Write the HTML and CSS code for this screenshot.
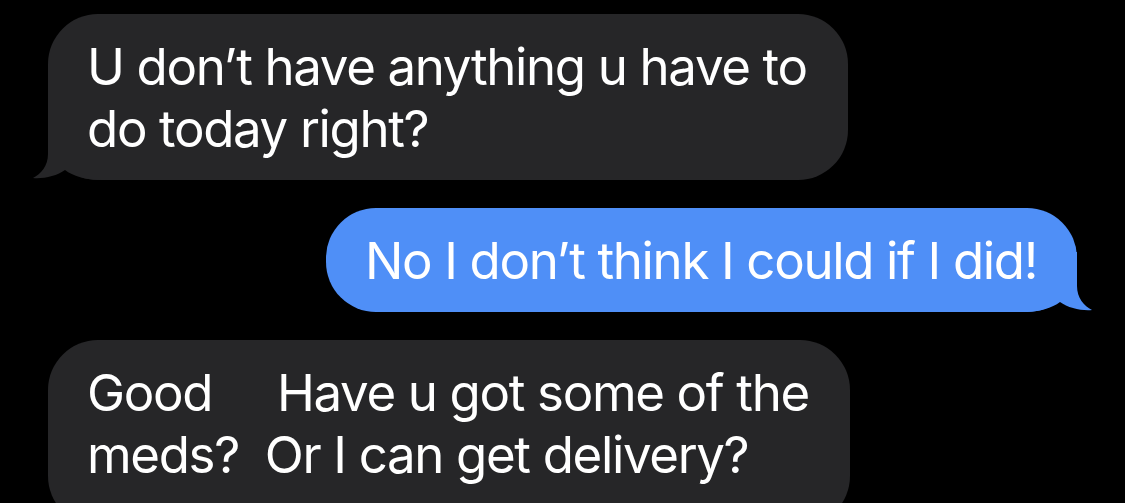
FILE: index.html
```html
<!DOCTYPE html>
<html lang="en">
<head>
  <meta charset="UTF-8">
  <meta name="viewport" content="width=device-width, initial-scale=1.0">
  <title>Messages</title>
  <link rel="stylesheet" href="styles.css">
</head>
<body>

  <div class="thread">
    <div class="bubble received">
      <p class="bubble-text">U don&rsquo;t have anything u have to<br>do today right?</p>
      <svg class="tail" viewBox="0 0 80 60" width="80" height="60">
        <path d="M15 0 L15 34 C15 46 8 54 0 58 C10 59 24 56 32 50 C40 56 52 60 70 60 L80 60 L80 0 Z"/>
      </svg>
    </div>

    <div class="bubble sent">
      <p class="bubble-text">No I don&rsquo;t think I could if I did!</p>
      <svg class="tail" viewBox="0 0 80 60" width="80" height="60">
        <path d="M15 0 L15 34 C15 46 8 54 0 58 C10 59 24 56 32 50 C40 56 52 60 70 60 L80 60 L80 0 Z"/>
      </svg>
    </div>

    <div class="bubble received last">
      <p class="bubble-text">Good &nbsp; &nbsp; Have u got some of the<br>meds? &nbsp;Or I can get delivery?</p>
    </div>
  </div>

</body>
</html>
```

FILE: styles.css
```css
body {
  margin: 0;
  background: #000;
  font-family: Inter, "Noto Sans", sans-serif;
  overflow: hidden;
  height: 503px;
}

.thread {
  display: flex;
  flex-direction: column;
  gap: 28px;
  padding: 14px 48px 0;
}

.bubble {
  position: relative;
  border-radius: 50px;
  padding: 22px 41px 20px 39px;
  color: #fff;
}

.bubble-text {
  position: relative;
  z-index: 1;
  margin: 0;
  font-size: 51px;
  line-height: 62px;
  letter-spacing: -1.35px;
  white-space: nowrap;
}

.received {
  align-self: flex-start;
  background: #262628;
}

.sent {
  align-self: flex-end;
  background: #4f8ff7;
  padding-right: 40px;
}

/* tail sits under the text, filling the lower corner */
.tail {
  position: absolute;
  bottom: 0;
  left: -15px;
}

.received .tail {
  fill: #262628;
}

.sent .tail {
  left: auto;
  right: -15px;
  fill: #4f8ff7;
  transform: scaleX(-1);
}

.last {
  padding-bottom: 40px;
}
```
